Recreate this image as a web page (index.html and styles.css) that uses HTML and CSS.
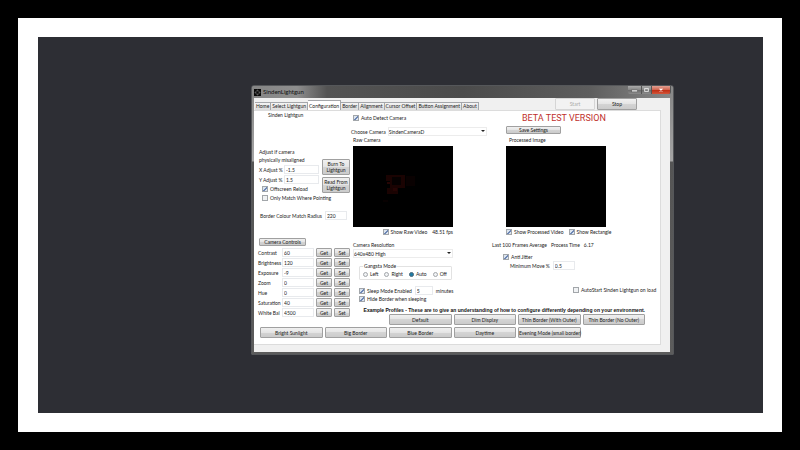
FILE: index.html
```html
<!doctype html>
<html lang="en">
<head>
  <meta charset="utf-8">
  <title>SindenLightgun</title>
  <meta name="viewport" content="width=device-width, initial-scale=1">
  <link rel="stylesheet" href="styles.css">
</head>

<body>
  <main class="screen">
    <section class="window">
      <header class="titlebar">
        <svg class="app-icon" viewBox="0 0 14 14">
          <rect width="14" height="14" fill="#0a0a0a"/>
          <circle cx="7" cy="7" r="4" fill="none" stroke="#777" stroke-width="1"/>
          <path d="M7 1v4M7 9v4M1 7h4M9 7h4" stroke="#777"/>
        </svg>
        <h1>SindenLightgun</h1>
        <div class="window-buttons">
          <button class="min" aria-label="Minimize"><svg viewBox="0 0 14 8"><rect x="4" y="4" width="6" height="2" fill="#eee" stroke="#555" stroke-width=".5"/></svg></button>
          <button class="max" aria-label="Maximize"><svg viewBox="0 0 10 8"><rect x="3" y="2.500" width="4" height="3" fill="none" stroke="#eee"/></svg></button>
          <button class="close" aria-label="Close"><svg viewBox="0 0 19 8"><path d="M8 2.500l3 3M11 2.500l-3 3" stroke="#fff" stroke-width="1.300"/></svg></button>
        </div>
      </header>

      <div class="client">
        <nav class="tabs">
          <button class="tab">Home</button>
          <button class="tab">Select Lightgun</button>
          <button class="tab active">Configuration</button>
          <button class="tab">Border</button>
          <button class="tab">Alignment</button>
          <button class="tab">Cursor Offset</button>
          <button class="tab">Button Assignment</button>
          <button class="tab">About</button>
          <div class="run-buttons">
            <button class="btn" disabled>Start</button>
            <button class="btn">Stop</button>
          </div>
        </nav>

        <div class="page">
          <div class="columns">
            <div class="col-left">
              <p class="gun-name">Sinden Lightgun</p>
              <div class="adjust">
                <div class="adjust-fields">
                  <p>Adjust if camera<br>physically misaligned</p>
                  <div class="row spread"><label for="xadj">X Adjust %</label><input class="text wide" id="xadj" value="-1.5"></div>
                  <div class="row spread"><label for="yadj">Y Adjust %</label><input class="text wide" id="yadj" value="1.5"></div>
                  <label class="check indent"><input type="checkbox" checked>Offscreen Reload</label>
                  <label class="check indent"><input type="checkbox">Only Match Where Pointing</label>
                </div>
                <div class="adjust-buttons">
                  <button class="btn">Burn To Lightgun</button>
                  <button class="btn">Read From Lightgun</button>
                </div>
              </div>
              <div class="row radius"><label for="radius">Border Colour Match Radius</label><input class="text" id="radius" value="220"></div>
              <button class="btn camera-controls">Camera Controls</button>
              <div class="camera-grid">
                <label for="contrast">Contrast</label><input class="text" id="contrast" value="60"><button class="btn">Get</button><button class="btn">Set</button>
                <label for="brightness">Brightness</label><input class="text" id="brightness" value="120"><button class="btn">Get</button><button class="btn">Set</button>
                <label for="exposure">Exposure</label><input class="text" id="exposure" value="-9"><button class="btn">Get</button><button class="btn">Set</button>
                <label for="zoom">Zoom</label><input class="text" id="zoom" value="0"><button class="btn">Get</button><button class="btn">Set</button>
                <label for="hue">Hue</label><input class="text" id="hue" value="0"><button class="btn">Get</button><button class="btn">Set</button>
                <label for="saturation">Saturation</label><input class="text" id="saturation" value="40"><button class="btn">Get</button><button class="btn">Set</button>
                <label for="white">White Bal</label><input class="text" id="white" value="4500"><button class="btn">Get</button><button class="btn">Set</button>
              </div>
            </div>

            <div class="col-middle">
              <label class="check detect"><input type="checkbox" checked>Auto Detect Camera</label>
              <div class="row choose">
                <label for="camera">Choose Camera</label>
                <span class="drop"><select id="camera"><option>SindenCameraD</option></select></span>
              </div>
              <p class="video-label">Raw Camera</p>
              <div class="video">
                <svg viewBox="0 0 100 81">
                  <path d="M33 29h19v13h-7v6H34v-6h3v-7h-4z" fill="#1a0302"/>
                  <path d="M39 31h9v8h-9z" fill="#060101"/>
                  <path d="M53 30h9v10h-9z" fill="#090101"/>
                  <path d="M34 36h3v2h-3zM40 42h4v3h-4z" fill="#260504"/>
                  <path d="M30 55h5" stroke="#100202"/>
                </svg>
              </div>
              <div class="row under-video right">
                <label class="check"><input type="checkbox" checked>Show Raw Video</label>
                <span>48.51 fps</span>
              </div>
              <label class="resolution-label" for="resolution">Camera Resolution</label>
              <span class="drop resolution"><select id="resolution"><option>640x480 High</option></select></span>
              <fieldset class="mode">
                <legend>Gangsta Mode</legend>
                <label class="check"><input type="radio" name="mode">Left</label>
                <label class="check"><input type="radio" name="mode">Right</label>
                <label class="check"><input type="radio" name="mode" checked>Auto</label>
                <label class="check"><input type="radio" name="mode">Off</label>
              </fieldset>
              <div class="row sleep">
                <label class="check"><input type="checkbox" checked>Sleep Mode Enabled</label>
                <input class="text short" id="minutes" value="5">
                <label for="minutes">minutes</label>
              </div>
              <label class="check hide"><input type="checkbox" checked>Hide Border when sleeping</label>
            </div>

            <div class="col-right">
              <h2>BETA TEST VERSION</h2>
              <button class="btn save">Save Settings</button>
              <p class="video-label">Processed Image</p>
              <div class="video"></div>
              <div class="row under-video">
                <label class="check"><input type="checkbox" checked>Show Processed Video</label>
                <label class="check"><input type="checkbox" checked>Show Rectangle</label>
              </div>
              <p class="row average"><span>Last 100 Frames Average</span><span>Process Time</span><span>6.17</span></p>
              <label class="check jitter"><input type="checkbox" checked>Anti Jitter</label>
              <div class="row move"><label for="move">Minimum Move %</label><input class="text" id="move" value="0.5"></div>
              <label class="check autostart"><input type="checkbox">AutoStart Sinden Lightgun on load</label>
            </div>
          </div>

          <section class="profiles">
            <h3>Example Profiles - These are to give an understanding of how to configure differently depending on your environment.</h3>
            <div class="profile-grid">
              <button class="btn first">Default</button>
              <button class="btn">Dim Display</button>
              <button class="btn">Thin Border (With Outer)</button>
              <button class="btn">Thin Border (No Outer)</button>
              <button class="btn">Bright Sunlight</button>
              <button class="btn">Big Border</button>
              <button class="btn">Blue Border</button>
              <button class="btn">Daytime</button>
              <button class="btn">Evening Mode (small border)</button>
            </div>
          </section>
        </div>
      </div>
    </section>
  </main>
</body>
</html>
```

FILE: styles.css
```css
* {
  box-sizing: border-box;
}

html,
body {
  height: 100%;
  margin: 0;
  background: #000;
}

body {
  padding: 18px;
  font-family: Lato, "Liberation Sans", sans-serif;
  font-size: 5px;
  line-height: 8px;
  color: #222;
}

h1,
h2,
h3,
p {
  margin: 0;
  font-weight: normal;
}

button,
input,
select {
  font: inherit;
  color: inherit;
  margin: 0;
  padding: 0;
}

.screen {
  position: relative;
  height: 100%;
  background: #2d2e34;
  border: 19px solid #fff;
  border-left-width: 20px;
}

/* window */

.window {
  position: absolute;
  left: 213px;
  top: 48px;
  width: 423px;
  padding: 0 3px 2px 2px;
  background: linear-gradient(to bottom, #858585, #a5a5a5 75px, #555 76px, #5c5c5c);
  border: 1px solid #55575a;
  border-radius: 3px 3px 1px 1px;
}

.titlebar {
  display: flex;
  align-items: center;
  height: 12px;
  margin: 0 -3px 0 -2px;
  padding-left: 2px;
  background: linear-gradient(to right, #858585, #8e8e8e 45px, #535353 75px, #4b4b4b 50%, #5d5d5d 80%, #8a8a8a);
  border-radius: 2px 2px 0 0;
}

.app-icon {
  width: 7px;
  height: 7px;
  margin-right: 2px;
}

.titlebar h1 {
  font-size: 6px;
  color: #111;
}

.window-buttons {
  display: flex;
  align-self: flex-start;
  margin-left: auto;
  margin-right: 2px;
}

.window-buttons button {
  display: flex;
  height: 8px;
  border: 0;
  border-right: 1px solid #555;
  background: linear-gradient(#aaa, #858585 50%, #696969 50%, #8b8b8b);
}

.window-buttons svg {
  width: 100%;
  height: 8px;
}

.window-buttons .min {
  width: 14px;
  border-radius: 0 0 0 2px;
}

.window-buttons .max {
  width: 10px;
}

.window-buttons .close {
  width: 19px;
  background: linear-gradient(#e0a093, #d1604a 50%, #bf2b12 50%, #d2553a);
  border-radius: 0 0 2px 0;
}

.client {
  padding: 0 9px 7px 0;
  background: #f0f0f0;
}

/* tabs */

.tabs {
  display: flex;
  align-items: flex-end;
  height: 12px;
  padding-left: 1px;
}

.tab {
  height: 8px;
  padding: 0 1px;
  line-height: 7px;
  background: linear-gradient(#f4f4f4, #dcdcdc);
  border: 1px solid #a5a7ab;
  border-bottom: 0;
  border-left-width: 0;
  white-space: nowrap;
}

.tab.active {
  height: 10px;
  line-height: 8px;
  background: #fff;
}

.run-buttons {
  display: flex;
  gap: 2px;
  margin-left: auto;
  margin-right: 24px;
}

.run-buttons .btn {
  width: 40px;
  height: 12px;
}

/* controls */

.btn {
  padding: 0;
  line-height: 6px;
  color: #222;
  background: linear-gradient(#f0f0f0, #e4e4e4 50%, #d4d4d4 50%, #cbcbcb);
  border: 1px solid #a0a0a0;
  border-radius: 1px;
}

.btn:disabled {
  color: #aaa;
  background: #f2f2f2;
  border-color: #d5d5d5;
}

.text {
  width: 22px;
  height: 9px;
  padding-left: 1px;
  background: #fff;
  border: 1px solid #e8eaed;
}

.text.wide {
  width: 35px;
}

.text.short {
  width: 18px;
}

.row {
  display: flex;
  align-items: center;
  white-space: nowrap;
}

.spread {
  justify-content: space-between;
}

.check {
  display: flex;
  align-items: center;
  gap: 2px;
  white-space: nowrap;
}

.check input {
  appearance: none;
  flex: none;
  width: 6px;
  height: 6px;
  background: #f0f2f4;
  border: 1px solid #a2a6aa;
}

.check input[type="checkbox"]:checked {
  background: linear-gradient(135deg, #dce5ef 45%, #6d86b5 45%, #6d86b5 65%, #dce5ef 65%);
}

.check input[type="radio"] {
  width: 5px;
  height: 5px;
  border-radius: 50%;
}

.check input[type="radio"]:checked {
  background: #1d7ba5;
  border-color: #4a6677;
}

.drop {
  position: relative;
  display: block;
}

.drop::after {
  content: "";
  position: absolute;
  right: 2px;
  top: 3px;
  border: 2px solid transparent;
  border-top-color: #222;
  border-bottom: 0;
}

.drop select {
  appearance: none;
  display: block;
  width: 100%;
  height: 9px;
  background: #fff;
  border: 1px solid #ececec;
}

/* configuration page */

.page {
  padding-bottom: 6px;
  background: #fff;
  border: 1px solid #dcdcdc;
  border-left: 0;
}

.columns {
  display: grid;
  grid-template-columns: 96px 142px 1fr;
  height: 195px;
}

.col-left {
  padding-left: 5px;
}

.gun-name {
  padding-left: 9px;
}

.adjust {
  display: flex;
  align-items: flex-start;
  gap: 3px;
  margin-top: 29px;
}

.adjust-fields {
  width: 60px;
}

.adjust-fields .row {
  margin-top: 1px;
}

.indent {
  margin-left: 3px;
  height: 9px;
}

.adjust-buttons {
  display: flex;
  flex-direction: column;
  gap: 2px;
  flex: 1;
  margin-top: 11px;
}

.adjust-buttons .btn {
  height: 16px;
}

.radius {
  gap: 3px;
  margin-top: 9px;
  padding-left: 1px;
}

.camera-controls {
  display: block;
  width: 47px;
  height: 8px;
  margin-top: 18px;
}

.camera-grid {
  display: grid;
  grid-template-columns: 22px 1fr 16px 16px;
  column-gap: 2px;
  row-gap: 1px;
  margin: 2px 0 0 -1px;
  align-items: center;
}

.camera-grid .text {
  width: 100%;
}

.camera-grid .btn {
  height: 9px;
}

.col-middle {
  display: flex;
  flex-direction: column;
  padding-left: 3px;
}

.detect {
  margin-top: 3px;
}

.choose {
  gap: 2px;
  margin: 5px 5px 0 -2px;
}

.choose .drop {
  flex: 1;
}

.video {
  width: 100px;
  height: 81px;
  margin-top: 2px;
  background: #000;
}

.video svg {
  display: block;
}

.under-video {
  gap: 5px;
  width: 100px;
  margin-top: 1px;
}

.under-video.right {
  justify-content: flex-end;
}

.resolution-label {
  margin-top: 5px;
}

.resolution {
  width: 100px;
}

.mode {
  display: flex;
  gap: 6px;
  width: 93px;
  height: 18px;
  margin: 4px 0 0 6px;
  padding: 0 3px;
  border: 1px solid #e2e2e2;
  border-radius: 1px;
}

.mode legend {
  padding: 0 1px;
}

.sleep {
  gap: 3px;
  margin: 6px 0 0 6px;
}

.hide {
  margin-left: 6px;
}

.col-right {
  padding-left: 14px;
}

.col-right h2 {
  padding-left: 16px;
  font-family: Roboto, sans-serif;
  font-size: 9px;
  line-height: 14px;
  color: #c0302c;
}

.save {
  display: block;
  width: 55px;
  height: 8px;
  margin-top: 1px;
}

.col-right .video-label {
  margin-top: 2px;
  padding-left: 3px;
}

.average {
  gap: 4px;
  margin: 5px 0 0 -14px;
}

.jitter {
  margin: 4px 0 0 -3px;
}

.move {
  gap: 3px;
  padding-left: 4px;
}

.autostart {
  margin: 16px 0 0 67px;
}

.profiles {
  padding: 0 15px 0 6px;
}

.profiles h3 {
  font-family: "Liberation Sans", Arial, sans-serif;
  font-size: 5px;
  font-weight: bold;
  color: #111;
  text-align: right;
  white-space: nowrap;
}

.profile-grid {
  display: grid;
  grid-template-columns: repeat(6, minmax(0, 1fr));
  gap: 2px;
}

.profile-grid .btn {
  height: 11px;
  white-space: nowrap;
}

.profile-grid .first {
  grid-column: 3;
}
```
